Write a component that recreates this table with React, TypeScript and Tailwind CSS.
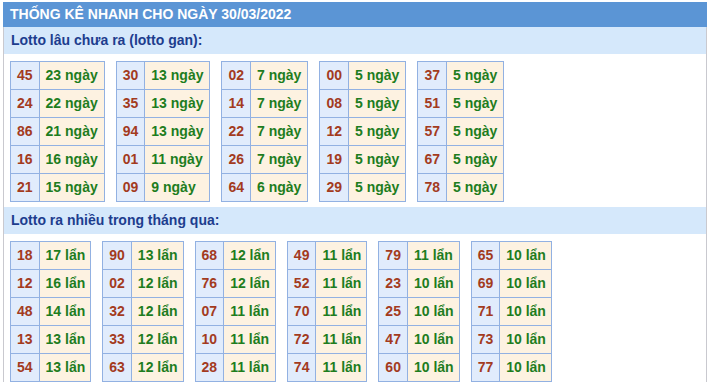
import React from 'react';

type Pair = [string, number];

const GAN: Pair[][] = [
  [['45', 23], ['24', 22], ['86', 21], ['16', 16], ['21', 15]],
  [['30', 13], ['35', 13], ['94', 13], ['01', 11], ['09', 9]],
  [['02', 7], ['14', 7], ['22', 7], ['26', 7], ['64', 6]],
  [['00', 5], ['08', 5], ['12', 5], ['19', 5], ['29', 5]],
  [['37', 5], ['51', 5], ['57', 5], ['67', 5], ['78', 5]],
];

const NHIEU: Pair[][] = [
  [['18', 17], ['12', 16], ['48', 14], ['13', 13], ['54', 13]],
  [['90', 13], ['02', 12], ['32', 12], ['33', 12], ['63', 12]],
  [['68', 12], ['76', 12], ['07', 11], ['10', 11], ['28', 11]],
  [['49', 11], ['52', 11], ['70', 11], ['72', 11], ['74', 11]],
  [['79', 11], ['23', 10], ['25', 10], ['47', 10], ['60', 10]],
  [['65', 10], ['69', 10], ['71', 10], ['73', 10], ['77', 10]],
];

function LotoTable({ rows, unit, tight }: { rows: Pair[]; unit: string; tight?: boolean }) {
  return (
    <div className="grid grid-cols-[auto_auto] border-l border-t border-[#92b1e2] self-start">
      {rows.map(([num, count]) => (
        <React.Fragment key={num}>
          <div className="h-[28px] flex items-center justify-center px-[6px] border-r border-b border-[#92b1e2] bg-[#e1ecfc] text-[#a33b1e]">
            {num}
          </div>
          <div
            className={
              tight
                ? 'h-[28px] flex items-center pl-[6px] pr-[5px] border-r border-b border-[#92b1e2] bg-[#fdf2e1] text-[#1e7d1e]'
                : 'h-[28px] flex items-center px-[6px] border-r border-b border-[#92b1e2] bg-[#fdf2e1] text-[#1e7d1e]'
            }
          >
            {count} {unit}
          </div>
        </React.Fragment>
      ))}
    </div>
  );
}

function SubHeader({ children }: { children: React.ReactNode }) {
  return (
    <div className="h-[27px] flex items-center px-[7px] bg-[#d5e8fb] text-[#1d3d8e] text-[14px] font-bold">
      {children}
    </div>
  );
}

export default function App() {
  return (
    <div className="pt-[2px] pl-[3px] bg-white font-['Liberation_Sans',Arial,sans-serif]">
      <div className="w-[704px]">
        <div className="h-[25px] flex items-center px-[7px] bg-[#5b95d5] text-white text-[14px] font-bold">
          THỐNG KÊ NHANH CHO NGÀY 30/03/2022
        </div>
        <div className="border-x border-[#c9c9cf]">
          <SubHeader>Lotto lâu chưa ra (lotto gan):</SubHeader>
          <div className="flex gap-[11px] px-[6px] pt-[7px] pb-[5px] text-[14px] font-bold">
            {GAN.map((t, i) => (
              <LotoTable key={i} rows={t} unit="ngày" />
            ))}
          </div>
          <SubHeader>Lotto ra nhiều trong tháng qua:</SubHeader>
          <div className="flex gap-[11px] px-[6px] pt-[7px] pb-[6px] text-[14px] font-bold">
            {NHIEU.map((t, i) => (
              <LotoTable key={i} rows={t} unit="lẩn" tight />
            ))}
          </div>
        </div>
      </div>
    </div>
  );
}
